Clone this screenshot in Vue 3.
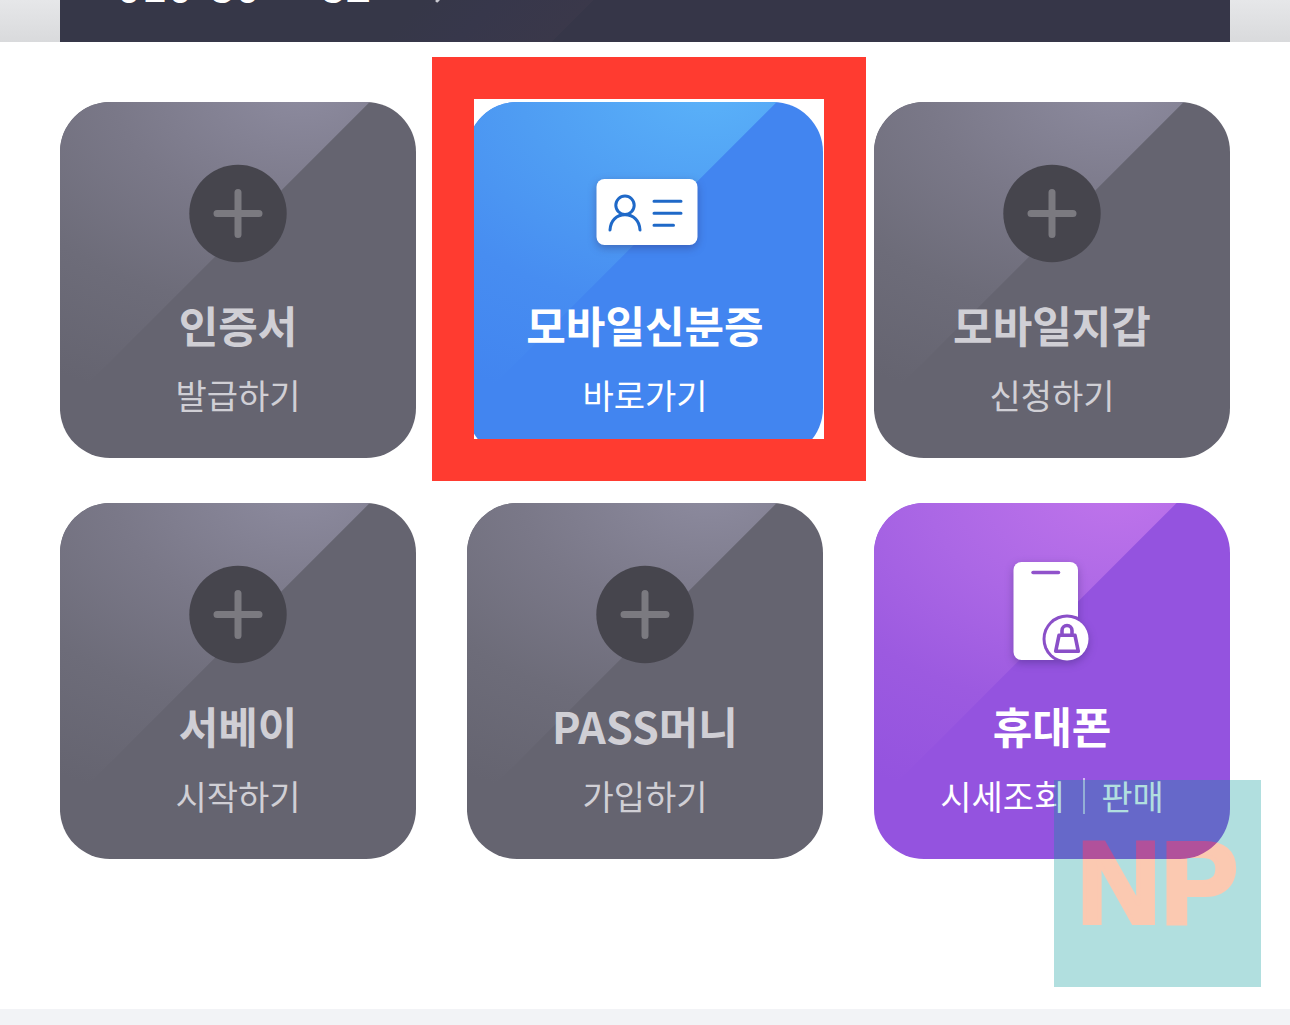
<script setup>
import { ref } from 'vue';

const phone = ref('010-80**-82**');

const tiles = ref([
  { title: '인증서', actions: ['발급하기'], icon: 'plus', color: 'gray' },
  { title: '모바일신분증', actions: ['바로가기'], icon: 'id', color: 'blue', highlight: true },
  { title: '모바일지갑', actions: ['신청하기'], icon: 'plus', color: 'gray' },
  { title: '서베이', actions: ['시작하기'], icon: 'plus', color: 'gray' },
  { title: 'PASS머니', actions: ['가입하기'], icon: 'plus', color: 'gray' },
  { title: '휴대폰', actions: ['시세조회', '판매'], icon: 'phone', color: 'purple' }
]);
</script>

<template>
  <div class="page">
    <header class="top">
      <div class="top-card">
        <span class="number">{{ phone }}</span>
        <svg class="chevron" viewBox="0 0 20 32" width="20" height="32" aria-hidden="true">
          <path d="M4 3 L16 16 L4 29" />
        </svg>
      </div>
    </header>

    <main class="services">
      <div class="grid">
        <div v-for="tile in tiles" :key="tile.title" class="cell">
          <a href="#" class="tile" :class="tile.color">
            <svg v-if="tile.icon === 'plus'" class="icon" viewBox="0 0 120 120" aria-hidden="true">
              <circle cx="60" cy="59.5" r="48.7" fill="#46454d" />
              <path d="M39 59.5 H81 M60 38.5 V80.5" stroke="#7b7a80" stroke-width="7" stroke-linecap="round" />
            </svg>

            <svg v-else-if="tile.icon === 'id'" class="icon shadow" viewBox="0 0 120 120" aria-hidden="true">
              <rect x="11.5" y="25" width="101" height="66" rx="8" fill="#fff" />
              <g fill="none" stroke="#1f69c8" stroke-width="3" stroke-linecap="round">
                <circle cx="40" cy="51.3" r="9.2" />
                <path d="M25 76 C25.5 66.5 31.5 60.8 40 60.8 C48.5 60.8 54.5 66.5 55 76" />
                <path d="M69 47.2 H96 M69 59.3 H96 M69 71.3 H88.5" />
              </g>
            </svg>

            <svg v-else class="icon shadow" viewBox="0 0 120 120" aria-hidden="true">
              <clipPath id="phoneBody">
                <rect x="21.5" y="7" width="64.5" height="98" rx="8" />
              </clipPath>
              <rect x="21.5" y="7" width="64.5" height="98" rx="8" fill="#fff" />
              <path d="M41 17.5 H66.5" stroke="#9152cb" stroke-width="3.5" stroke-linecap="round" />
              <circle cx="75" cy="84" r="24.5" fill="#8a4fc8" clip-path="url(#phoneBody)" />
              <circle cx="75" cy="84" r="21.5" fill="#fff" />
              <g fill="none" stroke="#8a4fc8" stroke-width="3.6" stroke-linejoin="round">
                <path d="M67 80.3 H83 L86.3 96.3 H63.7 Z" />
                <path d="M70 80 V75.5 A5 5 0 0 1 80 75.5 V80" />
              </g>
            </svg>

            <strong class="title">{{ tile.title }}</strong>
            <span class="actions">
              <span v-for="action in tile.actions" :key="action" class="action">{{ action }}</span>
            </span>
          </a>
          <div v-if="tile.highlight" class="frame"></div>
        </div>
      </div>

      <div class="watermark">NP</div>
    </main>
  </div>
</template>

<style>
body {
  margin: 0;
  background: #f2f3f6;
}
</style>

<style scoped>
.page {
  font-family: "Noto Sans CJK KR", sans-serif;
}

.top {
  padding: 0 60px;
  background: linear-gradient(#e6e7e9, #d9dadc);
}

.top-card {
  display: flex;
  align-items: flex-end;
  height: 42px;
  padding: 0 56px;
  overflow: hidden;
  background: linear-gradient(135deg, #363748 30%, #37374b 36%, #3a384a 44%, #363648 44%);
}

.number {
  margin-bottom: 36px;
  color: #fff;
  font-size: 45px;
  font-weight: 500;
  line-height: 46px;
}

.chevron {
  margin: 0 0 38px 18px;
  fill: none;
  stroke: #c8c8d0;
  stroke-width: 3;
  stroke-linecap: round;
}

.services {
  position: relative;
  padding: 60px 60px 150px;
  background: #fff;
}

.grid {
  display: grid;
  grid-template-columns: repeat(3, 1fr);
  gap: 45px 51px;
}

.cell {
  position: relative;
}

.tile {
  position: relative;
  display: flex;
  flex-direction: column;
  align-items: center;
  box-sizing: border-box;
  aspect-ratio: 1;
  padding-top: 52px;
  border-radius: 50px;
  overflow: hidden;
  text-decoration: none;
  color: #fff;
}

/* diagonal gloss in the upper left half */
.tile::before {
  content: "";
  position: absolute;
  inset: 0;
  clip-path: polygon(0 0, 87% 0, 0 87%);
}

.gray {
  background: #656470;
  color: #d0cfd5;
}

.gray::before {
  background: radial-gradient(ellipse 140% 92% at 68% -4%, #8d8b9f, #7a7888 38%, #6d6c79 68%, #656470);
}

.blue {
  background: #4285f0;
}

.blue::before {
  background: radial-gradient(ellipse 140% 92% at 68% -4%, #5ab2f9, #4f9df3 38%, #478df1 68%, #4285f0);
}

.purple {
  background: #9453df;
}

.purple::before {
  background: radial-gradient(ellipse 140% 92% at 68% -4%, #bf74eb, #ab67e5 38%, #9c5ae0 68%, #9453df);
  clip-path: polygon(0 0, 85% 0, 0 85%);
}

.icon {
  position: relative;
  width: 120px;
  height: 120px;
}

.shadow {
  filter: drop-shadow(0 3px 4px rgba(40, 30, 90, 0.35));
}

.title {
  position: relative;
  margin-top: 18px;
  font-size: 43px;
  font-weight: 700;
  line-height: 64px;
  white-space: nowrap;
}

.actions {
  position: relative;
  display: flex;
  align-items: center;
  margin-top: 13px;
  font-size: 34px;
  font-weight: 400;
  line-height: 52px;
  white-space: nowrap;
}

.action + .action {
  display: flex;
  align-items: center;
}

.action + .action::before {
  content: "";
  width: 2px;
  height: 36px;
  margin: 0 16px 0 18px;
  background: rgba(255, 255, 255, 0.6);
}

.frame {
  position: absolute;
  inset: -45px -43px -23px -35px;
  border: 42px solid #ff3b30;
  pointer-events: none;
}

.watermark {
  position: absolute;
  right: 29px;
  bottom: 22px;
  width: 207px;
  height: 207px;
  background: #009898;
  color: #f54e00;
  font-family: "Liberation Sans", sans-serif;
  font-size: 116px;
  font-weight: 700;
  line-height: 207px;
  text-align: center;
  -webkit-text-stroke: 4px #f54e00;
  opacity: 0.3;
}
</style>
